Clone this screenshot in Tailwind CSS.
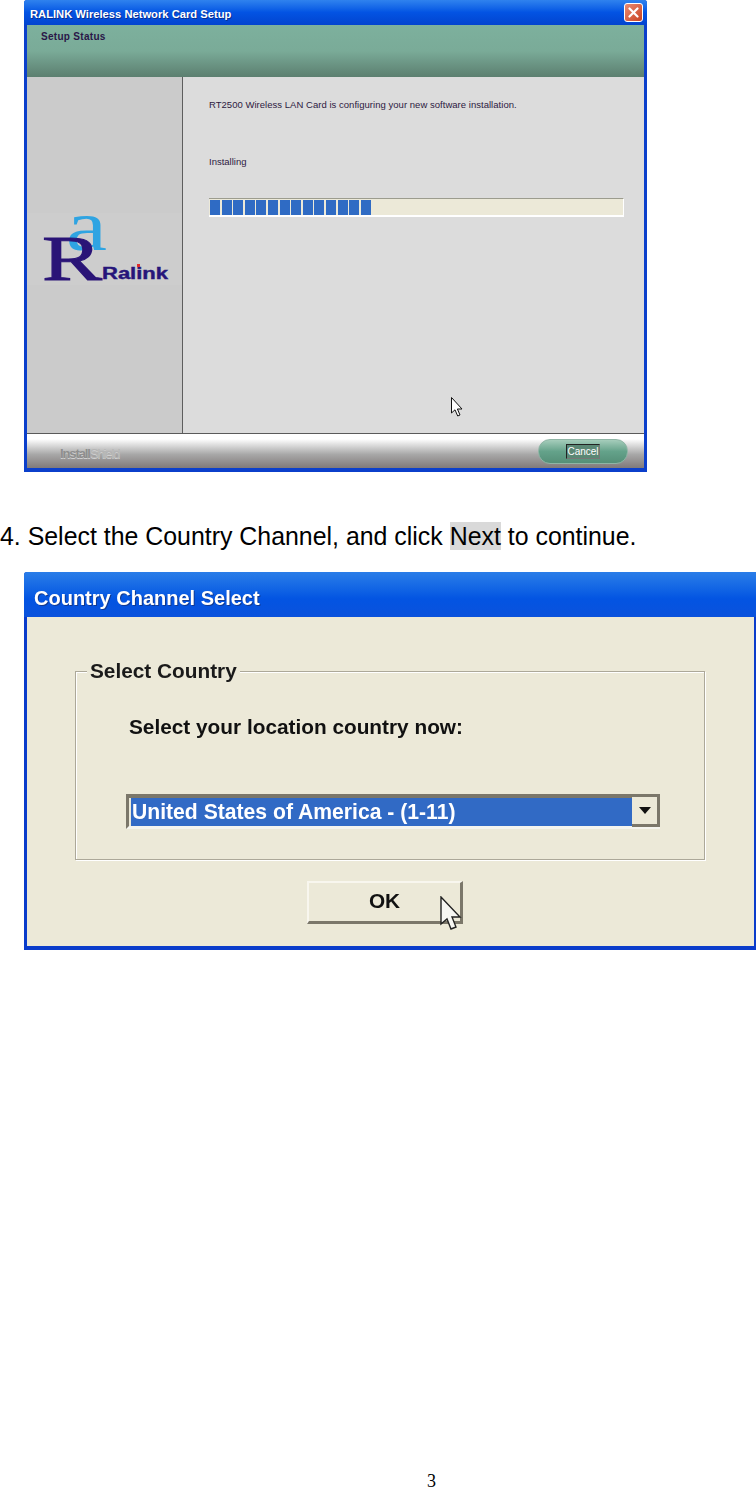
<!DOCTYPE html>
<html lang="en">
<head>
<meta charset="utf-8">
<title>Setup guide page 3</title>
<script src="https://cdn.jsdelivr.net/npm/@tailwindcss/browser@4"></script>
</head>
<body class="bg-white">
<div class="w-[756px] h-[1488px] flex flex-col overflow-hidden font-['Liberation_Sans',sans-serif] text-black">

  <!-- Window 1 -->
  <div class="ml-6 w-[623px] h-[472px] shrink-0 flex flex-col bg-[#0b3fcb] rounded-t-[3px] overflow-hidden">
    <div class="h-[25px] shrink-0 flex items-center justify-between pl-[6px] pr-[4px] bg-gradient-to-b from-[#2f82ee] via-[#0353e3] to-[#0244cf]">
      <span class="pt-[3px] text-white font-bold text-[11.2px] [text-shadow:1px_1px_0_#0a2f90]">RALINK Wireless Network Card Setup</span>
      <span class="w-[19px] h-[19px] rounded-[3px] border border-white bg-gradient-to-br from-[#e98a70] to-[#c8401f] flex items-center justify-center">
        <svg width="11" height="11" viewBox="0 0 11 11"><path d="M1.5 1.5 9.5 9.5M9.5 1.5 1.5 9.5" stroke="#fff" stroke-width="2.2" stroke-linecap="round"/></svg>
      </span>
    </div>
    <div class="flex-1 mx-[3px] flex flex-col min-h-0">
      <div class="h-[52px] shrink-0 pl-[14px] pt-[4px] bg-gradient-to-b from-[#7db09d] via-[#7aab98] via-50% to-[#5c7f70] text-[10px] tracking-[0.3px] font-bold text-[#2a1648]">Setup Status</div>
      <div class="h-[357px] shrink-0 flex border-b border-[#5a5a5a]">
        <div class="w-[156px] shrink-0 bg-[#cbcbcb] border-r border-[#5e5e5e] flex flex-col pt-[136px]">
          <div class="h-[72px] bg-[#cdcdcd] pl-[15px]">
            <svg class="overflow-visible" width="130" height="72" viewBox="0 0 130 72">
              <text x="24" y="37" font-family="Liberation Serif" font-size="72" fill="#2fa4e2" textLength="41" lengthAdjust="spacingAndGlyphs">a</text>
              <text x="0" y="67" font-family="Liberation Serif" font-size="64" fill="#2a1477" stroke="#2a1477" stroke-width="1" textLength="60" lengthAdjust="spacingAndGlyphs">R</text>
              <text x="60" y="66" font-family="Liberation Sans" font-size="16" font-weight="700" fill="#26157a" stroke="#26157a" stroke-width="0.4" textLength="66" lengthAdjust="spacingAndGlyphs">Ralink</text>
              <rect x="95" y="51" width="3" height="3" fill="#e02a2a"/>
            </svg>
          </div>
        </div>
        <div class="flex-1 bg-[#dcdcdc] pl-[26px] pr-[20px] pt-[22px] flex flex-col relative">
          <p class="text-[9.5px] tracking-[0.03px] leading-3 text-[#2d1a3f]">RT2500 Wireless LAN Card is configuring your new software installation.</p>
          <p class="mt-[45px] text-[9.5px] leading-3 text-[#2d1a3f]">Installing</p>
          <div class="mt-[30px] h-[19px] bg-[#ece9d8] border-t border-[#9c9c8e] border-b-2 border-b-white border-r border-r-white pl-[1px] flex items-center gap-[1.6px]">
            <i class="w-[10px] h-[15px] bg-[#2f6bc4]"></i><i class="w-[10px] h-[15px] bg-[#2f6bc4]"></i><i class="w-[10px] h-[15px] bg-[#2f6bc4]"></i><i class="w-[10px] h-[15px] bg-[#2f6bc4]"></i><i class="w-[10px] h-[15px] bg-[#2f6bc4]"></i><i class="w-[10px] h-[15px] bg-[#2f6bc4]"></i><i class="w-[10px] h-[15px] bg-[#2f6bc4]"></i><i class="w-[10px] h-[15px] bg-[#2f6bc4]"></i><i class="w-[10px] h-[15px] bg-[#2f6bc4]"></i><i class="w-[10px] h-[15px] bg-[#2f6bc4]"></i><i class="w-[10px] h-[15px] bg-[#2f6bc4]"></i><i class="w-[10px] h-[15px] bg-[#2f6bc4]"></i><i class="w-[10px] h-[15px] bg-[#2f6bc4]"></i><i class="w-[10px] h-[15px] bg-[#2f6bc4]"></i>
          </div>
          <svg class="absolute left-[268px] top-[320px]" width="12" height="20" viewBox="0 0 12 20"><path d="M.5.5V16L4 12.8 6.7 19 9 18 6.4 12H11Z" fill="#fff" stroke="#111"/></svg>
        </div>
      </div>
      <div class="h-[34px] shrink-0 flex items-center justify-between pl-[33px] pr-[16px] bg-gradient-to-b from-white from-15% via-[#a8a8a8] via-60% to-[#807a7a]">
        <span class="pt-[5px] text-[13px] font-bold tracking-[-1.1px] text-[#8e8e8e] [text-shadow:0_1px_0_#d0d0d0]">Install<span class="font-normal text-[#b4b4b4]">Shield</span></span>
        <span class="w-[90px] h-[25px] rounded-[12px] bg-gradient-to-b from-[#a5cdbb] via-[#64a28a] to-[#558f78] border border-[#8fb5a5] flex items-center justify-center">
          <span class="w-[34px] h-[15px] border border-[#222] border-b-[#777] border-r-[#777] bg-[#5b8875] text-white text-[10px] leading-[13px] text-center">Cancel</span>
        </span>
      </div>
    </div>
    <div class="h-[4px] shrink-0"></div>
  </div>

  <!-- Step text -->
  <p class="mt-[50px] text-[24.9px] leading-[29px] whitespace-nowrap">4. Select the Country Channel, and click <span class="bg-[#d9d9d9]">Next</span> to continue.</p>

  <!-- Window 2 -->
  <div class="mt-[21px] ml-6 w-[732px] h-[378px] shrink-0 flex flex-col bg-[#0a3ccb] rounded-tl-[3px] overflow-hidden blur-[0.3px]">
    <div class="h-[45px] shrink-0 flex items-center pl-[10px] pt-[6px] bg-gradient-to-b from-[#2a7de8] via-[#0354e2] via-60% to-[#0a52dc] text-white font-bold text-[20px] [text-shadow:1px_1px_0_#12398f]">Country Channel Select</div>
    <div class="flex-1 ml-[3px] mr-[2px] mb-[4px] bg-[#ece9d8] pl-[48px] pt-[54px] flex flex-col min-h-0">
      <div class="w-[630px] h-[189px] shrink-0 border border-[#aca899] shadow-[1px_1px_0_#fff,inset_1px_1px_0_#fff] relative pl-[50px] pt-[43px]">
        <span class="absolute left-[11px] top-[-13px] bg-[#ece9d8] px-[3px] text-[20.8px] leading-6 font-bold text-[#1a1a1a]">Select Country</span>
        <p class="pl-[3px] text-[20.8px] leading-6 font-bold text-[#111]">Select your location country now:</p>
        <div class="mt-[55px] w-[534px] h-[35px] border-t-4 border-l-[3px] border-[#7b776a] border-b-[3px] border-b-[#f4f4ee] flex pl-[2px]">
          <div class="flex-1 bg-[#316ac5] text-white font-bold text-[21.15px] leading-[27px] pl-[1px]">United States of America - (1-11)</div>
          <div class="w-[28px] mt-[-1px] mb-[-1px] bg-[#ece9d8] border-r-[3px] border-b-[3px] border-[#7b776a] flex items-center justify-center">
            <svg width="12" height="7" viewBox="0 0 12 7"><path d="M0 0H12L6 7Z" fill="#111"/></svg>
          </div>
        </div>
      </div>
      <div class="mt-[21px] ml-[232px] w-[156px] h-[43px] shrink-0 border-t-2 border-l-2 border-[#f8f6ee] border-r-[3px] border-b-[3px] border-r-[#7b776a] border-b-[#7b776a] flex items-center justify-center relative">
        <span class="text-[20.8px] font-bold text-[#111] pb-[2px]">OK</span>
        <svg class="absolute left-[131px] top-[13px]" width="22" height="35" viewBox="0 0 22 35"><path d="M1 1V28L7 23 11 33 16 31 12 21H20Z" fill="#f6f6f2" stroke="#222" stroke-width="1.4"/></svg>
      </div>
    </div>
  </div>

  <!-- Page number -->
  <div class="mt-auto h-[14px] pl-[427px] font-['Liberation_Serif',serif] text-[18px] leading-[14px]">3</div>
</div>
</body>
</html>
